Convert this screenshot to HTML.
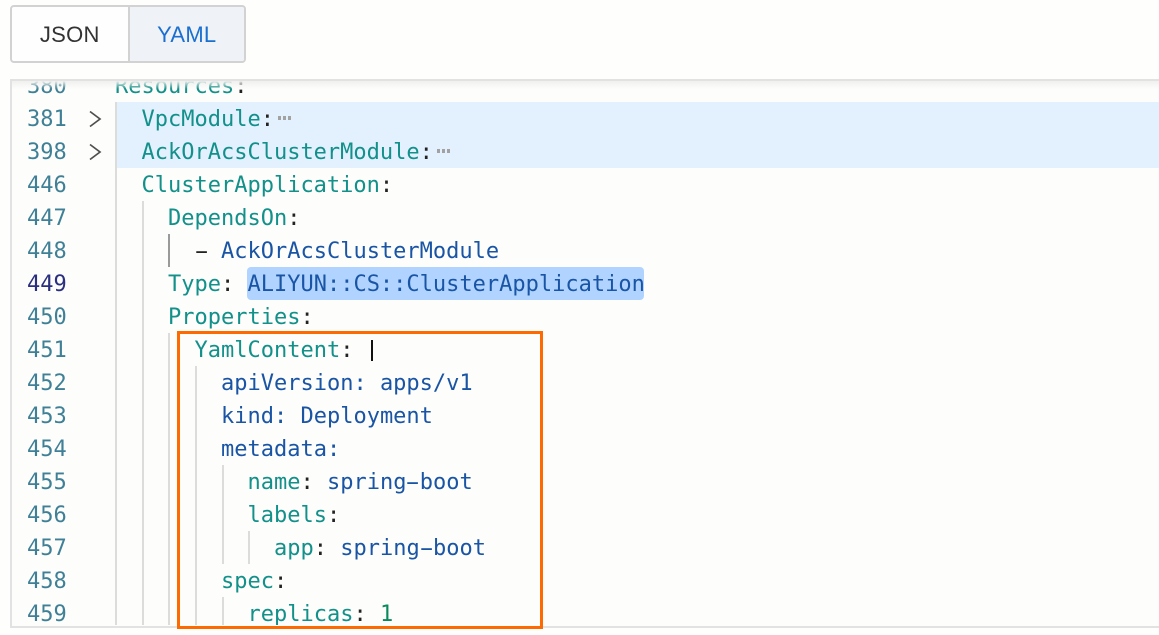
<!DOCTYPE html>
<html>
<head>
<meta charset="utf-8">
<style>
html,body{margin:0;padding:0;width:1159px;height:635px;overflow:hidden;background:#fefefc;}
.abs{position:absolute;}
#tabs{left:10px;top:5px;width:236px;height:58px;box-sizing:border-box;border:2px solid #d2d2d2;border-radius:4px;background:#fefefe;overflow:hidden;font-family:"Liberation Sans",sans-serif;font-size:22px;letter-spacing:.25px;}
#tabs .j{position:absolute;left:0;top:0;width:115.5px;height:54px;line-height:56px;text-align:center;color:#333;border-right:2px solid #d2d2d2;}
#tabs .y{position:absolute;left:117.5px;top:0;width:114.5px;height:54px;line-height:56px;text-align:center;color:#1a6fd0;background:#eff2f6;}
#panel{left:10px;top:79px;width:1149px;height:549px;overflow:hidden;background:#fdfdfb;border-top:2px solid #e2e2e2;border-left:2.5px solid #e2e2e2;border-bottom:2.5px solid #e2e2e2;box-sizing:border-box;}
#shadow{left:12px;top:81px;width:1147px;height:8px;background:linear-gradient(#f0f0ee,rgba(253,253,251,0));z-index:5;}
#clip{left:12px;top:81px;width:1147px;height:544px;overflow:hidden;filter:blur(.3px);}
.l{position:absolute;height:33px;line-height:33px;margin-top:1px;font-family:"DejaVu Sans Mono","Liberation Mono",monospace;font-size:22px;white-space:pre;color:#111;}
.n{left:15px;color:#3f8097;}
.a{color:#2a2f7f;}
.k{color:#12908a;}
.v{color:#1a55a5;}
.g{color:#0a8a5c;}
.c{color:#222;}
.h{display:inline-block;transform:scaleX(1.9);}
.band{position:absolute;left:103px;top:21px;width:1044px;height:66px;background:#e3f0fe;}
.hl{position:absolute;left:235px;top:186px;width:397px;height:33px;background:#b0d4ff;border-radius:4px;}
.ig{position:absolute;width:2px;background:#dcdcda;}
.ig.d{background:#9a9a9a;}
.dots{position:absolute;height:3px;width:13px;top:0;}
.dots i{position:absolute;top:0;width:3px;height:4px;background:#a2a2a2;}
#box{left:177px;top:331px;width:366px;height:298px;box-sizing:border-box;border:3.5px solid #ff6a00;z-index:10;}
#cur{left:371px;top:340px;width:2px;height:21px;background:#111;z-index:11;}
</style>
</head>
<body>
<div class="abs" id="tabs"><div class="j">JSON</div><div class="y">YAML</div></div>
<div class="abs" id="panel"></div>
<div class="abs" id="clip">
  <div class="band"></div>
  <div class="hl"></div>

  <div class="ig" style="left:103px;top:21px;height:523px;"></div>
  <div class="ig" style="left:130px;top:120px;height:424px;"></div>
  <div class="ig d" style="left:156px;top:153px;height:33px;"></div>
  <div class="ig" style="left:156px;top:252px;height:292px;"></div>
  <div class="ig" style="left:183px;top:285px;height:259px;"></div>
  <div class="ig" style="left:210px;top:384px;height:99px;"></div>
  <div class="ig" style="left:236px;top:450px;height:33px;"></div>
  <div class="ig" style="left:210px;top:516px;height:28px;"></div>

  <div class="l n" style="top:-12px">380</div><div class="l" style="left:103px;top:-12px"><span class="k">Resources</span><span class="c">:</span></div>
  <div class="l n" style="top:21px">381</div><div class="l" style="left:129.5px;top:21px"><span class="k">VpcModule</span><span class="c">:</span></div>
  <div class="l n" style="top:54px">398</div><div class="l" style="left:129.5px;top:54px"><span class="k">AckOrAcsClusterModule</span><span class="c">:</span></div>
  <div class="l n" style="top:87px">446</div><div class="l" style="left:129.5px;top:87px"><span class="k">ClusterApplication</span><span class="c">:</span></div>
  <div class="l n" style="top:120px">447</div><div class="l" style="left:156px;top:120px"><span class="k">DependsOn</span><span class="c">:</span></div>
  <div class="l n" style="top:153px">448</div><div class="l" style="left:182.5px;top:153px"><span class="c"><span class="h">-</span> </span><span class="v">AckOrAcsClusterModule</span></div>
  <div class="l n a" style="top:186px">449</div><div class="l" style="left:156px;top:186px"><span class="k">Type</span><span class="c">: </span><span class="v">ALIYUN::CS::ClusterApplication</span></div>
  <div class="l n" style="top:219px">450</div><div class="l" style="left:156px;top:219px"><span class="k">Properties</span><span class="c">:</span></div>
  <div class="l n" style="top:252px">451</div><div class="l" style="left:182.5px;top:252px"><span class="k">YamlContent</span><span class="c">:</span></div>
  <div class="l n" style="top:285px">452</div><div class="l" style="left:209px;top:285px"><span class="v">apiVersion: apps/v1</span></div>
  <div class="l n" style="top:318px">453</div><div class="l" style="left:209px;top:318px"><span class="v">kind: Deployment</span></div>
  <div class="l n" style="top:351px">454</div><div class="l" style="left:209px;top:351px"><span class="v">metadata:</span></div>
  <div class="l n" style="top:384px">455</div><div class="l" style="left:235.5px;top:384px"><span class="k">name</span><span class="c">: </span><span class="v">spring<span class="h">-</span>boot</span></div>
  <div class="l n" style="top:417px">456</div><div class="l" style="left:235.5px;top:417px"><span class="k">labels</span><span class="c">:</span></div>
  <div class="l n" style="top:450px">457</div><div class="l" style="left:262px;top:450px"><span class="k">app</span><span class="c">: </span><span class="v">spring<span class="h">-</span>boot</span></div>
  <div class="l n" style="top:483px">458</div><div class="l" style="left:209px;top:483px"><span class="k">spec</span><span class="c">:</span></div>
  <div class="l n" style="top:516px">459</div><div class="l" style="left:235.5px;top:516px"><span class="k">replicas</span><span class="c">: </span><span class="g">1</span></div>

  <svg class="abs" style="left:76px;top:28px" width="16" height="20" viewBox="0 0 16 20"><path d="M2 2.5 L12 10 L2 17.5" fill="none" stroke="#4f4f4f" stroke-width="1.7"/></svg>
  <svg class="abs" style="left:76px;top:61px" width="16" height="20" viewBox="0 0 16 20"><path d="M2 2.5 L12 10 L2 17.5" fill="none" stroke="#4f4f4f" stroke-width="1.7"/></svg>

  <div class="dots" style="left:266px;top:35px"><i style="left:0"></i><i style="left:5px"></i><i style="left:10px"></i></div>
  <div class="dots" style="left:425px;top:68px"><i style="left:0"></i><i style="left:5px"></i><i style="left:10px"></i></div>
</div>
<div class="abs" id="shadow"></div>
<div class="abs" id="box"></div>
<div class="abs" id="cur"></div>
</body>
</html>
